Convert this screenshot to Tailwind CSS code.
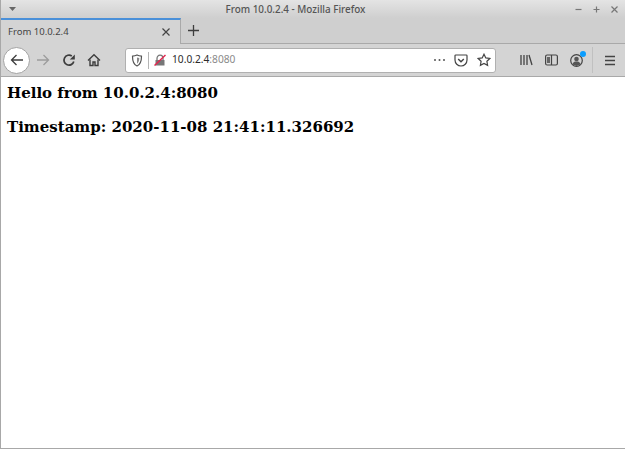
<!DOCTYPE html>
<html lang="en">
<head>
    <meta charset="UTF-8">
    <title>From 10.0.2.4</title>
    <script src="https://cdn.jsdelivr.net/npm/@tailwindcss/browser@4"></script>
</head>
<body class="bg-white overflow-hidden">
    <div class="w-[625px] h-[449px] flex flex-col border-l border-b border-[#a8a8a8] font-['Noto_Sans',sans-serif]">
        <!-- Title bar -->
        <div class="h-[18px] flex items-center bg-gradient-to-b from-[#e4e4e4] to-[#cfcfcf] text-[#555]">
            <div class="w-[23px] flex justify-center">
                <svg width="7" height="4" viewBox="0 0 7 4"><path d="M0 0h7L3.500 4z" fill="#666"/></svg>
            </div>
            <div class="flex-1 text-center text-[9.900px] font-medium pr-[7px]">From 10.0.2.4 - Mozilla Firefox</div>
            <div class="flex items-center gap-[9px] pr-[6px]">
                <svg width="9" height="9" viewBox="0 0 9 9"><path d="M1.500 4.500h6" stroke="#777" stroke-width="1.200"/></svg>
                <svg width="9" height="9" viewBox="0 0 9 9"><path d="M1.500 4.500h6M4.500 1.500v6" stroke="#777" stroke-width="1.200"/></svg>
                <svg width="9" height="9" viewBox="0 0 9 9"><path d="M1.500 1.500l6 6M7.500 1.500l-6 6" stroke="#777" stroke-width="1.200"/></svg>
            </div>
        </div>
        <!-- Tabs -->
        <div class="h-[26px] flex bg-[#cfcfcf] border-b border-[#a9a9a9]">
            <div class="w-[180px] -mb-px bg-[#d4d4d4] border-t-2 border-[#4a90d9] border-r border-r-[#a9a9a9] flex items-center justify-between pl-[7px] pr-[8px]">
                <span class="text-[9.500px] text-[#444]">From 10.0.2.4</span>
                <svg width="12" height="12" viewBox="0 0 12 12"><path d="M2.500 2.500l7 7M9.500 2.500l-7 7" stroke="#444" stroke-width="1.200"/></svg>
            </div>
            <div class="w-[24px] flex items-center justify-center">
                <svg width="13" height="13" viewBox="0 0 13 13"><path d="M6.500 1v11M1 6.500h11" stroke="#3d3d3d" stroke-width="1.300"/></svg>
            </div>
        </div>
        <!-- Toolbar -->
        <div class="h-[33px] flex items-center bg-[#d4d4d4] border-b border-[#a9a9a9]">
            <div class="ml-[2px] w-[27px] h-[27px] rounded-full bg-white border border-[#a3a3a3] flex items-center justify-center">
                <svg width="14" height="14" viewBox="0 0 14 14" fill="none" stroke="#3d3d3d" stroke-width="1.300"><path d="M13 7H1.500M6.500 2L1.500 7l5 5"/></svg>
            </div>
            <div class="ml-[6px] w-[14px] flex justify-center">
                <svg width="14" height="14" viewBox="0 0 14 14" fill="none" stroke="#9c9c9c" stroke-width="1.300"><path d="M1 7h11.500M7.500 2l5 5-5 5"/></svg>
            </div>
            <div class="ml-[12px]">
                <svg width="14" height="14" viewBox="0 0 14 14" fill="none" stroke="#3d3d3d" stroke-width="1.700"><path d="M11.800 8.500A5 5 0 1 1 9.800 3"/><path d="M12.800 1.500v5h-5z" fill="#3d3d3d" stroke="none"/></svg>
            </div>
            <div class="ml-[11px]">
                <svg width="14" height="14" viewBox="0 0 14 14" fill="none" stroke="#3d3d3d" stroke-width="1.400"><path d="M1 7.500L7 1.800l6 5.700"/><path d="M3 6.500V12.500H6V9h2v3.500h3V6.500"/></svg>
            </div>
            <!-- URL bar -->
            <div class="ml-[24px] w-[371px] h-[25px] bg-white rounded-[3px] border border-[#b0b0b0] flex items-center">
                <div class="ml-[5px] w-[12px] flex justify-center">
                    <svg width="12" height="13" viewBox="0 0 12 13" fill="none"><path d="M1.500 2.200C4 2 5 1.500 6 1c1 .5 2 1 4.500 1.200C10.500 7 9.500 10.500 6 12 2.500 10.500 1.500 7 1.500 2.200z" stroke="#555" stroke-width="1.200"/><path d="M6 3.500c.7.300 1.300.4 2.300.6C8.200 6.800 7.500 8.800 6 9.700z" fill="#888"/></svg>
                </div>
                <div class="ml-[5px] w-px h-[17px] bg-[#b5b5b5]"></div>
                <div class="ml-[5px] w-[12px] flex justify-center">
                    <svg width="12" height="12" viewBox="0 0 12 12" fill="none"><path d="M3 6V4.500C3 2.500 4.300 1.200 6 1.200S9 2.500 9 4.500V6" stroke="#777" stroke-width="1.300"/><path d="M1.500 6h9v5.500h-9z" fill="#777"/><path d="M.5 11.500L11.500 1" stroke="#e22850" stroke-width="1.500"/></svg>
                </div>
                <div class="ml-[6px] text-[10.200px] text-[#2b2b2b]">10.0.2.4<span class="text-[#8a8a8a]">:8080</span></div>
                <div class="ml-auto flex items-center">
                    <svg width="13" height="4" viewBox="0 0 13 4" fill="#555"><circle cx="2" cy="2" r="1"/><circle cx="6.500" cy="2" r="1"/><circle cx="11" cy="2" r="1"/></svg>
                    <svg class="ml-[8px]" width="14" height="13" viewBox="0 0 14 13" fill="none" stroke="#444" stroke-width="1.200"><path d="M1.800 1h10.400c.5 0 .8.300.8.800V6a6 6 0 0 1-12 0V1.800c0-.5.300-.8.800-.8z"/><path d="M4.200 5L7 7.700 9.800 5" stroke-width="1.500"/></svg>
                    <svg class="ml-[9px] mr-[4px]" width="14" height="14" viewBox="0 0 14 14" fill="none" stroke="#444" stroke-width="1.200"><path d="M7 1.200l1.800 3.700 4 .6-2.900 2.800.7 4L7 10.400l-3.600 1.900.7-4L1.200 5.500l4-.6z"/></svg>
                </div>
            </div>
            <!-- Right side buttons -->
            <svg class="ml-[24px]" width="13" height="12" viewBox="0 0 13 12" fill="none" stroke="#444" stroke-width="1.300"><path d="M1 1v10M4 1v10M7 1v10M9 1l3 10"/></svg>
            <svg class="ml-[12px]" width="13" height="12" viewBox="0 0 13 12" fill="none" stroke="#444" stroke-width="1.200"><rect x=".6" y="1" width="11.800" height="10" rx="1.500"/><path d="M2 3h3v6H2z" fill="#666" stroke="none"/><path d="M6.500 1v10"/></svg>
            <div class="ml-[12px] relative w-[14px] h-[14px]">
                <svg width="13" height="13" viewBox="0 0 13 13" class="mt-px"><circle cx="6.500" cy="6.500" r="5.800" fill="none" stroke="#444" stroke-width="1.200"/><circle cx="6.500" cy="5" r="2.300" fill="#555"/><path d="M2.500 10.500c.5-2.500 2-3 4-3s3.500.5 4 3l-4 1.500z" fill="#555"/></svg>
                <div class="absolute -top-[2px] -right-[2px] w-[6px] h-[6px] rounded-full bg-[#0a9dff]"></div>
            </div>
            <div class="ml-[8px] w-px h-[26px] bg-[#c0c0c0]"></div>
            <svg class="ml-[11px]" width="12" height="11" viewBox="0 0 12 11" stroke="#444" stroke-width="1.300"><path d="M1 1.500h10M1 5.500h10M1 9.500h10"/></svg>
        </div>
        <!-- Page -->
        <div class="flex-1 bg-white px-[6px] pt-[7px] font-['DejaVu_Serif',serif] font-bold text-black text-[15px] leading-[19px]">
            <p>Hello from 10.0.2.4:8080</p>
            <p class="mt-[15px]">Timestamp: 2020-11-08 21:41:11.326692</p>
        </div>
    </div>
</body>
</html>
